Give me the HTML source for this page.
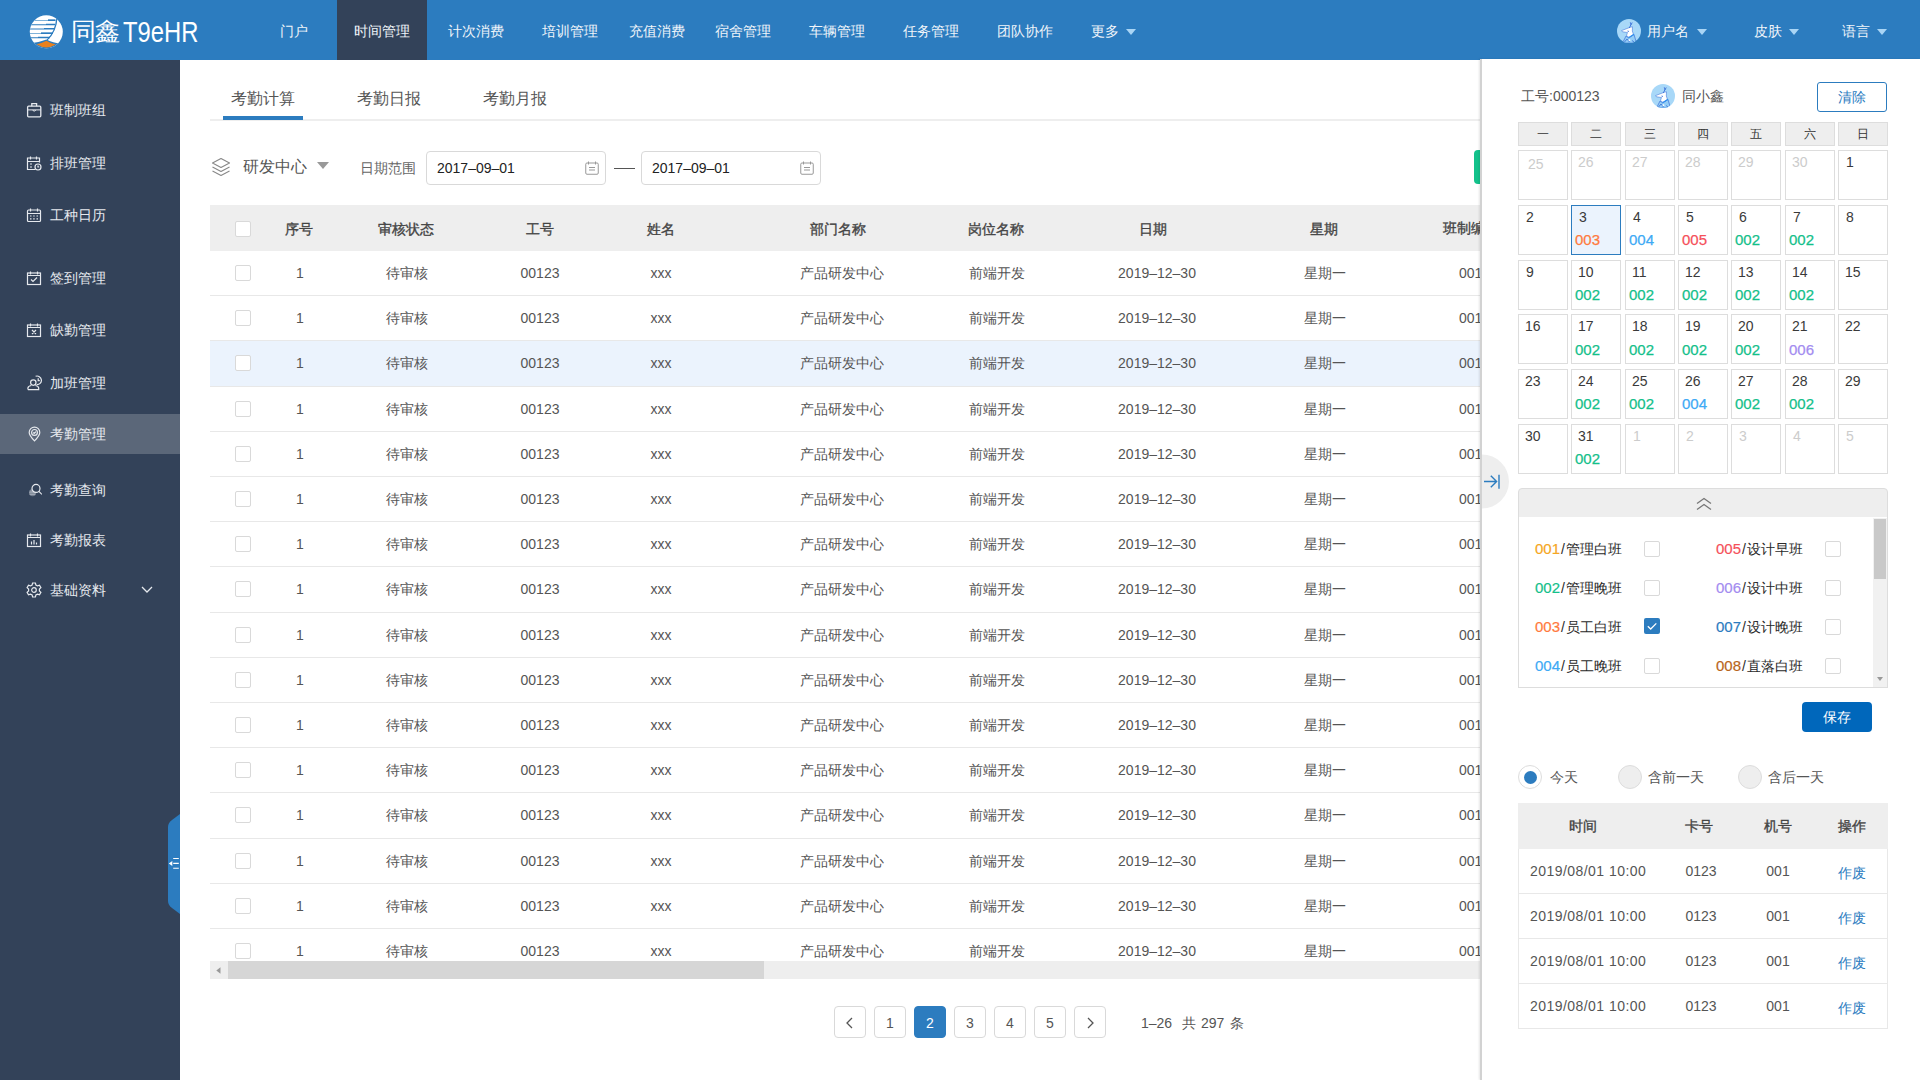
<!DOCTYPE html><html><head><meta charset="utf-8"><style>
*{box-sizing:border-box;margin:0;padding:0}
html,body{width:1920px;height:1080px;overflow:hidden;background:#fff;font-family:"Liberation Sans",sans-serif;font-size:14px;color:#555}
.abs{position:absolute}
.hdr{position:absolute;left:0;top:0;width:1920px;height:60px;background:#2c7cbf}
.nav{position:absolute;top:0.8px;height:60px;line-height:60px;color:#f0f5fa;font-size:14px;white-space:nowrap}
.side{position:absolute;left:0;top:60px;width:180px;height:1020px;background:#334259}
.si{position:absolute;left:0;width:180px;height:40px;line-height:40px;color:#e6e9ee;font-size:14px}
.si .t{position:absolute;left:50px;top:0}
.si svg{position:absolute;left:26px;top:12px}
.tc{position:absolute;text-align:center;white-space:nowrap}
.cb{position:absolute;width:16px;height:16px;border:1px solid #d9d9d9;border-radius:2px;background:#fff}
</style></head><body>

<div class="hdr"></div>
<svg class="abs" style="left:26px;top:12px" width="42" height="40" viewBox="0 0 42 40">
<defs><clipPath id="lc"><circle cx="20.3" cy="19.8" r="16.5"/></clipPath></defs>
<g clip-path="url(#lc)">
<rect x="0" y="0" width="42" height="40" fill="#fff"/>
<g fill="#2c7cbf">
<path d="M0 8h22v-0.6h7v1.5H0z" fill="#7fb2d9"/><path d="M22 7.4h7.5v1.5H22z"/>
<path d="M0 12.3h20v-0.6h9v1.5H0z"/>
<path d="M0 16.5h18v-0.6h10v1.5H0z"/>
<path d="M0 21h15v-0.6h12v1.5H0z" fill="#7fb2d9"/><path d="M15 20.4h12v1.5H15z"/>
<path d="M0 25.3h12v-0.6h12v1.5H0z"/>
<path d="M30.2 5.5 Q29.5 19 20.8 27.5 L21.6 28.3 Q30.8 19.5 31.6 5.5Z"/>
<path d="M0 31.5 Q12 31 20.5 27.6 Q27 31.5 42 32.5 V40 H0Z"/>
</g>
<path d="M10.5 32.3 Q16 31 20.5 28.7 Q25 31.5 29.8 32.6 Q20 38.5 10.5 32.3Z" fill="#e8811f"/>
</g></svg>
<div class="abs" style="left:71px;top:14px;height:34px;line-height:34px;color:#fff;font-size:25px;white-space:nowrap;letter-spacing:-1px">同鑫</div>
<div class="abs" style="left:123px;top:12px;height:40px;line-height:40px;color:#fff;font-size:29px;white-space:nowrap;transform:scaleX(0.82);transform-origin:0 50%">T9eHR</div>
<div class="abs" style="left:337px;top:0;width:90px;height:60px;background:#334259"></div>
<div class="nav" style="left:234px;width:120px;text-align:center">门户</div>
<div class="nav" style="left:322px;width:120px;text-align:center">时间管理</div>
<div class="nav" style="left:416px;width:120px;text-align:center">计次消费</div>
<div class="nav" style="left:510px;width:120px;text-align:center">培训管理</div>
<div class="nav" style="left:597px;width:120px;text-align:center">充值消费</div>
<div class="nav" style="left:683px;width:120px;text-align:center">宿舍管理</div>
<div class="nav" style="left:777px;width:120px;text-align:center">车辆管理</div>
<div class="nav" style="left:871px;width:120px;text-align:center">任务管理</div>
<div class="nav" style="left:965px;width:120px;text-align:center">团队协作</div>
<div class="nav" style="left:1045px;width:120px;text-align:center">更多</div>
<svg class="abs" style="left:1126px;top:29px" width="10" height="6" viewBox="0 0 10 6"><path d="M0 0H10L5.0 6Z" fill="#a9d5f5"/></svg>
<svg class="abs" style="left:1617px;top:19px" width="24" height="24" viewBox="0 0 24 24">
<defs><clipPath id="avc"><circle cx="12" cy="12" r="12"/></clipPath></defs>
<circle cx="12" cy="12" r="12" fill="#a8d8f8"/>
<g clip-path="url(#avc)">
<path d="M5.5 24 L9 17 L11.8 19 L17 15.5 L19.5 24 Z" fill="#93cdf6" stroke="#2d5fd0" stroke-width="0.6"/>
<path d="M4.6 11.6 L10 9.5 L13.5 8.2 L15.5 7.8 L15.3 12 L16.5 15.5 L12 18.5 L9.5 16.5 L10.5 13.5 L5.5 12.8 Z" fill="#fff" stroke="#3a6fd8" stroke-width="0.55"/>
<path d="M12.3 9 L14 5.5 M14 5.8 L13.3 3.3 M14 5.8 L15.2 3.5 M10.5 12 L12 12.5" stroke="#3a6fd8" stroke-width="0.9" fill="none"/>
<path d="M11.5 18.6 L17 15.2" stroke="#2b8ff0" stroke-width="1.1"/>
<path d="M7.5 23 L10 20 L12.5 23 M15 21.5 L17 23" stroke="#2d5fd0" stroke-width="0.7" fill="none"/>
<circle cx="12.5" cy="21.2" r="0.9" fill="#fff"/>
</g>
</svg>
<div class="nav" style="left:1647px">用户名</div>
<svg class="abs" style="left:1697px;top:29px" width="10" height="6" viewBox="0 0 10 6"><path d="M0 0H10L5.0 6Z" fill="#a9d5f5"/></svg>
<div class="nav" style="left:1754px">皮肤</div>
<svg class="abs" style="left:1789px;top:29px" width="10" height="6" viewBox="0 0 10 6"><path d="M0 0H10L5.0 6Z" fill="#a9d5f5"/></svg>
<div class="nav" style="left:1842px">语言</div>
<svg class="abs" style="left:1877px;top:29px" width="10" height="6" viewBox="0 0 10 6"><path d="M0 0H10L5.0 6Z" fill="#a9d5f5"/></svg>
<div class="side"></div>
<div class="si" style="top:90px;"><svg width="16" height="16" viewBox="0 0 16 16"><rect x="1.6" y="4.2" width="13.2" height="10.6" rx="1" stroke="#e6e9ee" stroke-width="1.3" fill="none"/><path d="M5.8 4.2V1.6h4.8v2.6" stroke="#e6e9ee" stroke-width="1.3" fill="none"/><path d="M1.6 7.9h13.2" stroke="#e6e9ee" stroke-width="1" fill="none"/><path d="M6.6 8.3q1.6 1.6 3.2 0" stroke="#e6e9ee" stroke-width="1" fill="none"/></svg><span class="t">班制班组</span></div>
<div class="si" style="top:143px;"><svg width="16" height="16" viewBox="0 0 16 16"><path d="M9 14.5H1.5V3h12v4.5M4.5 1.5v3M10.5 1.5v3M1.5 6.5h12M4 9h2M4 12h2" stroke="#e6e9ee" stroke-width="1.2" fill="none"/><circle cx="12" cy="12" r="3" stroke="#e6e9ee" stroke-width="1.2" fill="none"/><path d="M12 10.5V12h1.2" stroke="#e6e9ee" stroke-width="1.2" fill="none"/></svg><span class="t">排班管理</span></div>
<div class="si" style="top:195px;"><svg width="16" height="16" viewBox="0 0 16 16"><rect x="1.5" y="3" width="13" height="11.5" rx="1" stroke="#e6e9ee" stroke-width="1.2" fill="none"/><path d="M4.5 1.5v3M11.5 1.5v3M1.5 6.5h13M4 9h1.5M7.2 9h1.5M10.5 9H12M4 11.8h1.5M7.2 11.8h1.5M10.5 11.8H12" stroke="#e6e9ee" stroke-width="1.2" fill="none"/></svg><span class="t">工种日历</span></div>
<div class="si" style="top:258px;"><svg width="16" height="16" viewBox="0 0 16 16"><rect x="1.5" y="3" width="13" height="11.5" stroke="#e6e9ee" stroke-width="1.2" fill="none"/><path d="M4.5 1.5v3M11.5 1.5v3M1.5 5.5h13M5 9.5l2 2 4-4" stroke="#e6e9ee" stroke-width="1.2" fill="none"/></svg><span class="t">签到管理</span></div>
<div class="si" style="top:310px;"><svg width="16" height="16" viewBox="0 0 16 16"><rect x="1.5" y="3" width="13" height="11.5" stroke="#e6e9ee" stroke-width="1.2" fill="none"/><path d="M4.5 1.5v3M11.5 1.5v3M1.5 5.5h13M6 8l4 4M10 8l-4 4" stroke="#e6e9ee" stroke-width="1.2" fill="none"/></svg><span class="t">缺勤管理</span></div>
<div class="si" style="top:363px;"><svg width="16" height="16" viewBox="0 0 16 16"><path d="M9.6 1.3A4.3 4.3 0 1 1 10.6 9.6" stroke="#e6e9ee" stroke-width="1.2" fill="none"/><path d="M12.2 3.3v2.3h1.6" stroke="#e6e9ee" stroke-width="1.2" fill="none"/><circle cx="7.3" cy="7.6" r="2.7" stroke="#e6e9ee" stroke-width="1.2" fill="none"/><path d="M1.9 14.6V13.2Q1.9 11.1 5.2 10.5M9.4 10.5Q12.7 11.1 12.7 13.2V14.6H1.9" stroke="#e6e9ee" stroke-width="1.2" fill="none"/></svg><span class="t">加班管理</span></div>
<div class="si" style="top:414px;background:#5b6779;"><svg width="16" height="16" viewBox="0 0 16 16"><path d="M8.5 14.8C5 11.2 3.2 8.7 3.2 6.4a5.3 5.3 0 0 1 10.6 0c0 2.3-1.8 4.8-5.3 8.4z" stroke="#e6e9ee" stroke-width="1.2" fill="none"/><circle cx="8.5" cy="6.4" r="2.9" stroke="#e6e9ee" stroke-width="1.2" fill="none"/><path d="M7.2 6.5l1 1 1.8-1.9" stroke="#e6e9ee" stroke-width="1.2" fill="none"/></svg><span class="t">考勤管理</span></div>
<div class="si" style="top:470px;"><svg width="16" height="16" viewBox="0 0 16 16"><circle cx="6.6" cy="10.6" r="3.6" fill="rgba(230,233,238,0.35)"/><path d="M3.6 9.2h5.5M3.2 10.8h6.4M3.5 12.4h5.8" stroke="rgba(230,233,238,0.55)" stroke-width="0.8"/><circle cx="10" cy="6.4" r="4" fill="#334259" stroke="#e6e9ee" stroke-width="1.2"/><path d="M12.9 9.4l3 3" stroke="#e6e9ee" stroke-width="1.2" fill="none"/></svg><span class="t">考勤查询</span></div>
<div class="si" style="top:520px;"><svg width="16" height="16" viewBox="0 0 16 16"><rect x="1.5" y="3" width="13" height="11.5" stroke="#e6e9ee" stroke-width="1.2" fill="none"/><path d="M4.5 1.5v3M11.5 1.5v3M1.5 5.5h13M5.5 12.5V9.5M8 12.5V8M10.5 12.5v-2" stroke="#e6e9ee" stroke-width="1.2" fill="none"/></svg><span class="t">考勤报表</span></div>
<div class="si" style="top:570px;"><svg width="16" height="16" viewBox="0 0 16 16"><path d="M6.6 1h2.8l.5 2 1.6.9 2-.6 1.4 2.4-1.5 1.4v1.8l1.5 1.4-1.4 2.4-2-.6-1.6.9-.5 2H6.6l-.5-2-1.6-.9-2 .6L1.1 10.3l1.5-1.4V7.1L1.1 5.7l1.4-2.4 2 .6 1.6-.9z" stroke="#e6e9ee" stroke-width="1.2" fill="none"/><circle cx="8" cy="8" r="2.3" stroke="#e6e9ee" stroke-width="1.2" fill="none"/></svg><span class="t">基础资料</span></div>
<svg class="abs" style="left:141px;top:586px" width="12" height="8" viewBox="0 0 12 8"><path d="M1 1l5 5 5-5" stroke="#e6e9ee" stroke-width="1.3" fill="none"/></svg>
<svg class="abs" style="left:168px;top:814px" width="12" height="100" viewBox="0 0 12 100"><path d="M12 0 L4 6 Q0 9 0 13 V87 Q0 91 4 94 L12 100 Z" fill="#2c7cbf"/>
<path d="M0.8 49.4L4.3 46.9V51.9Z" fill="#fff"/><path d="M5.2 44.5h5.6M5.2 49.4h5.6M5.2 54.3h5.6" stroke="#fff" stroke-width="1.1" fill="none"/></svg>
<div class="abs" style="left:231px;top:86.7px;height:24px;line-height:24px;font-size:16px;color:#555;white-space:nowrap">考勤计算</div>
<div class="abs" style="left:357px;top:86.7px;height:24px;line-height:24px;font-size:16px;color:#555;white-space:nowrap">考勤日报</div>
<div class="abs" style="left:483px;top:86.7px;height:24px;line-height:24px;font-size:16px;color:#555;white-space:nowrap">考勤月报</div>
<div class="abs" style="left:210px;top:119px;width:1270px;height:2px;background:#eeeeee"></div>
<div class="abs" style="left:223px;top:116px;width:80px;height:4px;background:#2c7cbf"></div>
<svg class="abs" style="left:211px;top:157px" width="20" height="20" viewBox="0 0 20 20"><path d="M10 1.5L18.5 6 10 10.5 1.5 6z" stroke="#888" stroke-width="1.1" fill="none" stroke-linejoin="round"/><path d="M1.5 10L10 14.5 18.5 10M1.5 14L10 18.5 18.5 14" stroke="#888" stroke-width="1.1" fill="none" stroke-linejoin="round"/></svg>
<div class="abs" style="left:243px;top:155px;height:24px;line-height:24px;font-size:16px;color:#555;white-space:nowrap">研发中心</div>
<svg class="abs" style="left:317px;top:162px" width="12" height="7" viewBox="0 0 12 7"><path d="M0 0H12L6.0 7Z" fill="#999"/></svg>
<div class="abs" style="left:360px;top:158px;height:20px;line-height:20px;font-size:14px;color:#666;white-space:nowrap">日期范围</div>
<div class="abs" style="left:426px;top:151px;width:180px;height:34px;border:1px solid #d9d9d9;border-radius:4px;background:#fff"></div>
<div class="abs" style="left:437px;top:158px;height:20px;line-height:20px;font-size:14px;color:#222;white-space:nowrap">2017–09–01</div>
<svg class="abs" style="left:585px;top:161px" width="14" height="14" viewBox="0 0 14 14"><rect x="0.75" y="2" width="12.5" height="11.25" rx="1.2" stroke="#999" stroke-width="1" fill="none"/><path d="M3.5 0.5v3M10.5 0.5v3M4 6.5h6M4 9h6" stroke="#999" stroke-width="1" fill="none"/></svg>
<div class="abs" style="left:641px;top:151px;width:180px;height:34px;border:1px solid #d9d9d9;border-radius:4px;background:#fff"></div>
<div class="abs" style="left:652px;top:158px;height:20px;line-height:20px;font-size:14px;color:#222;white-space:nowrap">2017–09–01</div>
<svg class="abs" style="left:800px;top:161px" width="14" height="14" viewBox="0 0 14 14"><rect x="0.75" y="2" width="12.5" height="11.25" rx="1.2" stroke="#999" stroke-width="1" fill="none"/><path d="M3.5 0.5v3M10.5 0.5v3M4 6.5h6M4 9h6" stroke="#999" stroke-width="1" fill="none"/></svg>
<div class="abs" style="left:614px;top:168px;width:21px;height:1px;background:#555"></div>
<div class="abs" style="left:1474px;top:150px;width:20px;height:34px;border-radius:4px;background:#13c28b"></div>
<div class="abs" style="left:210px;top:205px;width:1270px;height:46px;background:#eeeeee"></div>
<div class="cb" style="left:235px;top:221px"></div>
<div class="tc" style="left:219px;top:218.7px;width:160px;height:20px;line-height:20px;color:#444;-webkit-text-stroke:0.35px #444">序号</div>
<div class="tc" style="left:326px;top:218.7px;width:160px;height:20px;line-height:20px;color:#444;-webkit-text-stroke:0.35px #444">审核状态</div>
<div class="tc" style="left:460px;top:218.7px;width:160px;height:20px;line-height:20px;color:#444;-webkit-text-stroke:0.35px #444">工号</div>
<div class="tc" style="left:581px;top:218.7px;width:160px;height:20px;line-height:20px;color:#444;-webkit-text-stroke:0.35px #444">姓名</div>
<div class="tc" style="left:758px;top:218.7px;width:160px;height:20px;line-height:20px;color:#444;-webkit-text-stroke:0.35px #444">部门名称</div>
<div class="tc" style="left:916px;top:218.7px;width:160px;height:20px;line-height:20px;color:#444;-webkit-text-stroke:0.35px #444">岗位名称</div>
<div class="tc" style="left:1073px;top:218.7px;width:160px;height:20px;line-height:20px;color:#444;-webkit-text-stroke:0.35px #444">日期</div>
<div class="tc" style="left:1244px;top:218.7px;width:160px;height:20px;line-height:20px;color:#444;-webkit-text-stroke:0.35px #444">星期</div>
<div class="abs" style="left:210px;top:251.0px;width:1270px;height:45.2px;background:#fff;border-bottom:1px solid #e8e8e8"></div>
<div class="cb" style="left:235px;top:265.0px"></div>
<div class="tc" style="left:220px;top:263.0px;width:160px;height:20px;line-height:20px;color:#555">1</div>
<div class="tc" style="left:327px;top:263.0px;width:160px;height:20px;line-height:20px;color:#555">待审核</div>
<div class="tc" style="left:460px;top:263.0px;width:160px;height:20px;line-height:20px;color:#555">00123</div>
<div class="tc" style="left:581px;top:263.0px;width:160px;height:20px;line-height:20px;color:#555">xxx</div>
<div class="tc" style="left:762px;top:263.0px;width:160px;height:20px;line-height:20px;color:#555">产品研发中心</div>
<div class="tc" style="left:917px;top:263.0px;width:160px;height:20px;line-height:20px;color:#555">前端开发</div>
<div class="tc" style="left:1077px;top:263.0px;width:160px;height:20px;line-height:20px;color:#555">2019–12–30</div>
<div class="tc" style="left:1245px;top:263.0px;width:160px;height:20px;line-height:20px;color:#555">星期一</div>
<div class="abs" style="left:210px;top:296.2px;width:1270px;height:45.2px;background:#fff;border-bottom:1px solid #e8e8e8"></div>
<div class="cb" style="left:235px;top:310.2px"></div>
<div class="tc" style="left:220px;top:308.2px;width:160px;height:20px;line-height:20px;color:#555">1</div>
<div class="tc" style="left:327px;top:308.2px;width:160px;height:20px;line-height:20px;color:#555">待审核</div>
<div class="tc" style="left:460px;top:308.2px;width:160px;height:20px;line-height:20px;color:#555">00123</div>
<div class="tc" style="left:581px;top:308.2px;width:160px;height:20px;line-height:20px;color:#555">xxx</div>
<div class="tc" style="left:762px;top:308.2px;width:160px;height:20px;line-height:20px;color:#555">产品研发中心</div>
<div class="tc" style="left:917px;top:308.2px;width:160px;height:20px;line-height:20px;color:#555">前端开发</div>
<div class="tc" style="left:1077px;top:308.2px;width:160px;height:20px;line-height:20px;color:#555">2019–12–30</div>
<div class="tc" style="left:1245px;top:308.2px;width:160px;height:20px;line-height:20px;color:#555">星期一</div>
<div class="abs" style="left:210px;top:341.4px;width:1270px;height:45.2px;background:#ebf3fd;border-bottom:1px solid #e8e8e8"></div>
<div class="cb" style="left:235px;top:355.4px"></div>
<div class="tc" style="left:220px;top:353.4px;width:160px;height:20px;line-height:20px;color:#555">1</div>
<div class="tc" style="left:327px;top:353.4px;width:160px;height:20px;line-height:20px;color:#555">待审核</div>
<div class="tc" style="left:460px;top:353.4px;width:160px;height:20px;line-height:20px;color:#555">00123</div>
<div class="tc" style="left:581px;top:353.4px;width:160px;height:20px;line-height:20px;color:#555">xxx</div>
<div class="tc" style="left:762px;top:353.4px;width:160px;height:20px;line-height:20px;color:#555">产品研发中心</div>
<div class="tc" style="left:917px;top:353.4px;width:160px;height:20px;line-height:20px;color:#555">前端开发</div>
<div class="tc" style="left:1077px;top:353.4px;width:160px;height:20px;line-height:20px;color:#555">2019–12–30</div>
<div class="tc" style="left:1245px;top:353.4px;width:160px;height:20px;line-height:20px;color:#555">星期一</div>
<div class="abs" style="left:210px;top:386.6px;width:1270px;height:45.2px;background:#fff;border-bottom:1px solid #e8e8e8"></div>
<div class="cb" style="left:235px;top:400.6px"></div>
<div class="tc" style="left:220px;top:398.6px;width:160px;height:20px;line-height:20px;color:#555">1</div>
<div class="tc" style="left:327px;top:398.6px;width:160px;height:20px;line-height:20px;color:#555">待审核</div>
<div class="tc" style="left:460px;top:398.6px;width:160px;height:20px;line-height:20px;color:#555">00123</div>
<div class="tc" style="left:581px;top:398.6px;width:160px;height:20px;line-height:20px;color:#555">xxx</div>
<div class="tc" style="left:762px;top:398.6px;width:160px;height:20px;line-height:20px;color:#555">产品研发中心</div>
<div class="tc" style="left:917px;top:398.6px;width:160px;height:20px;line-height:20px;color:#555">前端开发</div>
<div class="tc" style="left:1077px;top:398.6px;width:160px;height:20px;line-height:20px;color:#555">2019–12–30</div>
<div class="tc" style="left:1245px;top:398.6px;width:160px;height:20px;line-height:20px;color:#555">星期一</div>
<div class="abs" style="left:210px;top:431.8px;width:1270px;height:45.2px;background:#fff;border-bottom:1px solid #e8e8e8"></div>
<div class="cb" style="left:235px;top:445.8px"></div>
<div class="tc" style="left:220px;top:443.8px;width:160px;height:20px;line-height:20px;color:#555">1</div>
<div class="tc" style="left:327px;top:443.8px;width:160px;height:20px;line-height:20px;color:#555">待审核</div>
<div class="tc" style="left:460px;top:443.8px;width:160px;height:20px;line-height:20px;color:#555">00123</div>
<div class="tc" style="left:581px;top:443.8px;width:160px;height:20px;line-height:20px;color:#555">xxx</div>
<div class="tc" style="left:762px;top:443.8px;width:160px;height:20px;line-height:20px;color:#555">产品研发中心</div>
<div class="tc" style="left:917px;top:443.8px;width:160px;height:20px;line-height:20px;color:#555">前端开发</div>
<div class="tc" style="left:1077px;top:443.8px;width:160px;height:20px;line-height:20px;color:#555">2019–12–30</div>
<div class="tc" style="left:1245px;top:443.8px;width:160px;height:20px;line-height:20px;color:#555">星期一</div>
<div class="abs" style="left:210px;top:477.0px;width:1270px;height:45.2px;background:#fff;border-bottom:1px solid #e8e8e8"></div>
<div class="cb" style="left:235px;top:491.0px"></div>
<div class="tc" style="left:220px;top:489.0px;width:160px;height:20px;line-height:20px;color:#555">1</div>
<div class="tc" style="left:327px;top:489.0px;width:160px;height:20px;line-height:20px;color:#555">待审核</div>
<div class="tc" style="left:460px;top:489.0px;width:160px;height:20px;line-height:20px;color:#555">00123</div>
<div class="tc" style="left:581px;top:489.0px;width:160px;height:20px;line-height:20px;color:#555">xxx</div>
<div class="tc" style="left:762px;top:489.0px;width:160px;height:20px;line-height:20px;color:#555">产品研发中心</div>
<div class="tc" style="left:917px;top:489.0px;width:160px;height:20px;line-height:20px;color:#555">前端开发</div>
<div class="tc" style="left:1077px;top:489.0px;width:160px;height:20px;line-height:20px;color:#555">2019–12–30</div>
<div class="tc" style="left:1245px;top:489.0px;width:160px;height:20px;line-height:20px;color:#555">星期一</div>
<div class="abs" style="left:210px;top:522.2px;width:1270px;height:45.2px;background:#fff;border-bottom:1px solid #e8e8e8"></div>
<div class="cb" style="left:235px;top:536.2px"></div>
<div class="tc" style="left:220px;top:534.2px;width:160px;height:20px;line-height:20px;color:#555">1</div>
<div class="tc" style="left:327px;top:534.2px;width:160px;height:20px;line-height:20px;color:#555">待审核</div>
<div class="tc" style="left:460px;top:534.2px;width:160px;height:20px;line-height:20px;color:#555">00123</div>
<div class="tc" style="left:581px;top:534.2px;width:160px;height:20px;line-height:20px;color:#555">xxx</div>
<div class="tc" style="left:762px;top:534.2px;width:160px;height:20px;line-height:20px;color:#555">产品研发中心</div>
<div class="tc" style="left:917px;top:534.2px;width:160px;height:20px;line-height:20px;color:#555">前端开发</div>
<div class="tc" style="left:1077px;top:534.2px;width:160px;height:20px;line-height:20px;color:#555">2019–12–30</div>
<div class="tc" style="left:1245px;top:534.2px;width:160px;height:20px;line-height:20px;color:#555">星期一</div>
<div class="abs" style="left:210px;top:567.4px;width:1270px;height:45.2px;background:#fff;border-bottom:1px solid #e8e8e8"></div>
<div class="cb" style="left:235px;top:581.4px"></div>
<div class="tc" style="left:220px;top:579.4px;width:160px;height:20px;line-height:20px;color:#555">1</div>
<div class="tc" style="left:327px;top:579.4px;width:160px;height:20px;line-height:20px;color:#555">待审核</div>
<div class="tc" style="left:460px;top:579.4px;width:160px;height:20px;line-height:20px;color:#555">00123</div>
<div class="tc" style="left:581px;top:579.4px;width:160px;height:20px;line-height:20px;color:#555">xxx</div>
<div class="tc" style="left:762px;top:579.4px;width:160px;height:20px;line-height:20px;color:#555">产品研发中心</div>
<div class="tc" style="left:917px;top:579.4px;width:160px;height:20px;line-height:20px;color:#555">前端开发</div>
<div class="tc" style="left:1077px;top:579.4px;width:160px;height:20px;line-height:20px;color:#555">2019–12–30</div>
<div class="tc" style="left:1245px;top:579.4px;width:160px;height:20px;line-height:20px;color:#555">星期一</div>
<div class="abs" style="left:210px;top:612.6px;width:1270px;height:45.2px;background:#fff;border-bottom:1px solid #e8e8e8"></div>
<div class="cb" style="left:235px;top:626.6px"></div>
<div class="tc" style="left:220px;top:624.6px;width:160px;height:20px;line-height:20px;color:#555">1</div>
<div class="tc" style="left:327px;top:624.6px;width:160px;height:20px;line-height:20px;color:#555">待审核</div>
<div class="tc" style="left:460px;top:624.6px;width:160px;height:20px;line-height:20px;color:#555">00123</div>
<div class="tc" style="left:581px;top:624.6px;width:160px;height:20px;line-height:20px;color:#555">xxx</div>
<div class="tc" style="left:762px;top:624.6px;width:160px;height:20px;line-height:20px;color:#555">产品研发中心</div>
<div class="tc" style="left:917px;top:624.6px;width:160px;height:20px;line-height:20px;color:#555">前端开发</div>
<div class="tc" style="left:1077px;top:624.6px;width:160px;height:20px;line-height:20px;color:#555">2019–12–30</div>
<div class="tc" style="left:1245px;top:624.6px;width:160px;height:20px;line-height:20px;color:#555">星期一</div>
<div class="abs" style="left:210px;top:657.8px;width:1270px;height:45.2px;background:#fff;border-bottom:1px solid #e8e8e8"></div>
<div class="cb" style="left:235px;top:671.8px"></div>
<div class="tc" style="left:220px;top:669.8px;width:160px;height:20px;line-height:20px;color:#555">1</div>
<div class="tc" style="left:327px;top:669.8px;width:160px;height:20px;line-height:20px;color:#555">待审核</div>
<div class="tc" style="left:460px;top:669.8px;width:160px;height:20px;line-height:20px;color:#555">00123</div>
<div class="tc" style="left:581px;top:669.8px;width:160px;height:20px;line-height:20px;color:#555">xxx</div>
<div class="tc" style="left:762px;top:669.8px;width:160px;height:20px;line-height:20px;color:#555">产品研发中心</div>
<div class="tc" style="left:917px;top:669.8px;width:160px;height:20px;line-height:20px;color:#555">前端开发</div>
<div class="tc" style="left:1077px;top:669.8px;width:160px;height:20px;line-height:20px;color:#555">2019–12–30</div>
<div class="tc" style="left:1245px;top:669.8px;width:160px;height:20px;line-height:20px;color:#555">星期一</div>
<div class="abs" style="left:210px;top:703.0px;width:1270px;height:45.2px;background:#fff;border-bottom:1px solid #e8e8e8"></div>
<div class="cb" style="left:235px;top:717.0px"></div>
<div class="tc" style="left:220px;top:715.0px;width:160px;height:20px;line-height:20px;color:#555">1</div>
<div class="tc" style="left:327px;top:715.0px;width:160px;height:20px;line-height:20px;color:#555">待审核</div>
<div class="tc" style="left:460px;top:715.0px;width:160px;height:20px;line-height:20px;color:#555">00123</div>
<div class="tc" style="left:581px;top:715.0px;width:160px;height:20px;line-height:20px;color:#555">xxx</div>
<div class="tc" style="left:762px;top:715.0px;width:160px;height:20px;line-height:20px;color:#555">产品研发中心</div>
<div class="tc" style="left:917px;top:715.0px;width:160px;height:20px;line-height:20px;color:#555">前端开发</div>
<div class="tc" style="left:1077px;top:715.0px;width:160px;height:20px;line-height:20px;color:#555">2019–12–30</div>
<div class="tc" style="left:1245px;top:715.0px;width:160px;height:20px;line-height:20px;color:#555">星期一</div>
<div class="abs" style="left:210px;top:748.2px;width:1270px;height:45.2px;background:#fff;border-bottom:1px solid #e8e8e8"></div>
<div class="cb" style="left:235px;top:762.2px"></div>
<div class="tc" style="left:220px;top:760.2px;width:160px;height:20px;line-height:20px;color:#555">1</div>
<div class="tc" style="left:327px;top:760.2px;width:160px;height:20px;line-height:20px;color:#555">待审核</div>
<div class="tc" style="left:460px;top:760.2px;width:160px;height:20px;line-height:20px;color:#555">00123</div>
<div class="tc" style="left:581px;top:760.2px;width:160px;height:20px;line-height:20px;color:#555">xxx</div>
<div class="tc" style="left:762px;top:760.2px;width:160px;height:20px;line-height:20px;color:#555">产品研发中心</div>
<div class="tc" style="left:917px;top:760.2px;width:160px;height:20px;line-height:20px;color:#555">前端开发</div>
<div class="tc" style="left:1077px;top:760.2px;width:160px;height:20px;line-height:20px;color:#555">2019–12–30</div>
<div class="tc" style="left:1245px;top:760.2px;width:160px;height:20px;line-height:20px;color:#555">星期一</div>
<div class="abs" style="left:210px;top:793.4px;width:1270px;height:45.2px;background:#fff;border-bottom:1px solid #e8e8e8"></div>
<div class="cb" style="left:235px;top:807.4px"></div>
<div class="tc" style="left:220px;top:805.4px;width:160px;height:20px;line-height:20px;color:#555">1</div>
<div class="tc" style="left:327px;top:805.4px;width:160px;height:20px;line-height:20px;color:#555">待审核</div>
<div class="tc" style="left:460px;top:805.4px;width:160px;height:20px;line-height:20px;color:#555">00123</div>
<div class="tc" style="left:581px;top:805.4px;width:160px;height:20px;line-height:20px;color:#555">xxx</div>
<div class="tc" style="left:762px;top:805.4px;width:160px;height:20px;line-height:20px;color:#555">产品研发中心</div>
<div class="tc" style="left:917px;top:805.4px;width:160px;height:20px;line-height:20px;color:#555">前端开发</div>
<div class="tc" style="left:1077px;top:805.4px;width:160px;height:20px;line-height:20px;color:#555">2019–12–30</div>
<div class="tc" style="left:1245px;top:805.4px;width:160px;height:20px;line-height:20px;color:#555">星期一</div>
<div class="abs" style="left:210px;top:838.6px;width:1270px;height:45.2px;background:#fff;border-bottom:1px solid #e8e8e8"></div>
<div class="cb" style="left:235px;top:852.6px"></div>
<div class="tc" style="left:220px;top:850.6px;width:160px;height:20px;line-height:20px;color:#555">1</div>
<div class="tc" style="left:327px;top:850.6px;width:160px;height:20px;line-height:20px;color:#555">待审核</div>
<div class="tc" style="left:460px;top:850.6px;width:160px;height:20px;line-height:20px;color:#555">00123</div>
<div class="tc" style="left:581px;top:850.6px;width:160px;height:20px;line-height:20px;color:#555">xxx</div>
<div class="tc" style="left:762px;top:850.6px;width:160px;height:20px;line-height:20px;color:#555">产品研发中心</div>
<div class="tc" style="left:917px;top:850.6px;width:160px;height:20px;line-height:20px;color:#555">前端开发</div>
<div class="tc" style="left:1077px;top:850.6px;width:160px;height:20px;line-height:20px;color:#555">2019–12–30</div>
<div class="tc" style="left:1245px;top:850.6px;width:160px;height:20px;line-height:20px;color:#555">星期一</div>
<div class="abs" style="left:210px;top:883.8px;width:1270px;height:45.2px;background:#fff;border-bottom:1px solid #e8e8e8"></div>
<div class="cb" style="left:235px;top:897.8px"></div>
<div class="tc" style="left:220px;top:895.8px;width:160px;height:20px;line-height:20px;color:#555">1</div>
<div class="tc" style="left:327px;top:895.8px;width:160px;height:20px;line-height:20px;color:#555">待审核</div>
<div class="tc" style="left:460px;top:895.8px;width:160px;height:20px;line-height:20px;color:#555">00123</div>
<div class="tc" style="left:581px;top:895.8px;width:160px;height:20px;line-height:20px;color:#555">xxx</div>
<div class="tc" style="left:762px;top:895.8px;width:160px;height:20px;line-height:20px;color:#555">产品研发中心</div>
<div class="tc" style="left:917px;top:895.8px;width:160px;height:20px;line-height:20px;color:#555">前端开发</div>
<div class="tc" style="left:1077px;top:895.8px;width:160px;height:20px;line-height:20px;color:#555">2019–12–30</div>
<div class="tc" style="left:1245px;top:895.8px;width:160px;height:20px;line-height:20px;color:#555">星期一</div>
<div class="abs" style="left:210px;top:929.0px;width:1270px;height:45.2px;background:#fff;border-bottom:1px solid #e8e8e8"></div>
<div class="cb" style="left:235px;top:943.0px"></div>
<div class="tc" style="left:220px;top:941.0px;width:160px;height:20px;line-height:20px;color:#555">1</div>
<div class="tc" style="left:327px;top:941.0px;width:160px;height:20px;line-height:20px;color:#555">待审核</div>
<div class="tc" style="left:460px;top:941.0px;width:160px;height:20px;line-height:20px;color:#555">00123</div>
<div class="tc" style="left:581px;top:941.0px;width:160px;height:20px;line-height:20px;color:#555">xxx</div>
<div class="tc" style="left:762px;top:941.0px;width:160px;height:20px;line-height:20px;color:#555">产品研发中心</div>
<div class="tc" style="left:917px;top:941.0px;width:160px;height:20px;line-height:20px;color:#555">前端开发</div>
<div class="tc" style="left:1077px;top:941.0px;width:160px;height:20px;line-height:20px;color:#555">2019–12–30</div>
<div class="tc" style="left:1245px;top:941.0px;width:160px;height:20px;line-height:20px;color:#555">星期一</div>
<div class="abs" style="left:210px;top:961px;width:1270px;height:18px;background:#eeeeee"></div>
<div class="abs" style="left:228px;top:961px;width:536px;height:18px;background:#d6d6d6"></div>
<svg class="abs" style="left:216px;top:967px" width="5" height="7" viewBox="0 0 5 7"><path d="M4.5 0.3V6.7L0.3 3.5Z" fill="#999"/></svg>
<div class="abs" style="left:180px;top:979px;width:1300px;height:101px;background:#fff"></div>
<div class="abs" style="left:834px;top:1006px;width:32px;height:32px;border:1px solid #d9d9d9;border-radius:4px;line-height:30px;padding-top:1px;text-align:center;font-size:14px;color:#555;"><svg width="10" height="12" viewBox="0 0 10 12" style="vertical-align:-1px"><path d="M7 1L2 6l5 5" stroke="#555" stroke-width="1.3" fill="none"/></svg></div>
<div class="abs" style="left:874px;top:1006px;width:32px;height:32px;border:1px solid #d9d9d9;border-radius:4px;line-height:30px;padding-top:1px;text-align:center;font-size:14px;color:#555;">1</div>
<div class="abs" style="left:914px;top:1006px;width:32px;height:32px;border:1px solid #d9d9d9;border-radius:4px;line-height:30px;padding-top:1px;text-align:center;font-size:14px;color:#555;background:#2c7cbf;border-color:#2c7cbf;color:#fff;">2</div>
<div class="abs" style="left:954px;top:1006px;width:32px;height:32px;border:1px solid #d9d9d9;border-radius:4px;line-height:30px;padding-top:1px;text-align:center;font-size:14px;color:#555;">3</div>
<div class="abs" style="left:994px;top:1006px;width:32px;height:32px;border:1px solid #d9d9d9;border-radius:4px;line-height:30px;padding-top:1px;text-align:center;font-size:14px;color:#555;">4</div>
<div class="abs" style="left:1034px;top:1006px;width:32px;height:32px;border:1px solid #d9d9d9;border-radius:4px;line-height:30px;padding-top:1px;text-align:center;font-size:14px;color:#555;">5</div>
<div class="abs" style="left:1074px;top:1006px;width:32px;height:32px;border:1px solid #d9d9d9;border-radius:4px;line-height:30px;padding-top:1px;text-align:center;font-size:14px;color:#555;"><svg width="10" height="12" viewBox="0 0 10 12" style="vertical-align:-1px"><path d="M3 1l5 5-5 5" stroke="#555" stroke-width="1.3" fill="none"/></svg></div>
<div class="abs" style="left:1141px;top:1013px;height:20px;line-height:20px;color:#555;white-space:nowrap">1–26</div>
<div class="abs" style="left:1182px;top:1013px;height:20px;line-height:20px;color:#555;white-space:nowrap">共</div>
<div class="abs" style="left:1201px;top:1013px;height:20px;line-height:20px;color:#555;white-space:nowrap">297</div>
<div class="abs" style="left:1230px;top:1013px;height:20px;line-height:20px;color:#555;white-space:nowrap">条</div>
<div class="abs" style="left:1443px;top:218px;height:20px;line-height:20px;color:#444;-webkit-text-stroke:0.35px #444;white-space:nowrap">班制编号</div>
<div class="abs" style="left:1459px;top:263.0px;height:20px;line-height:20px;color:#555;white-space:nowrap">001</div>
<div class="abs" style="left:1459px;top:308.2px;height:20px;line-height:20px;color:#555;white-space:nowrap">001</div>
<div class="abs" style="left:1459px;top:353.4px;height:20px;line-height:20px;color:#555;white-space:nowrap">001</div>
<div class="abs" style="left:1459px;top:398.6px;height:20px;line-height:20px;color:#555;white-space:nowrap">001</div>
<div class="abs" style="left:1459px;top:443.8px;height:20px;line-height:20px;color:#555;white-space:nowrap">001</div>
<div class="abs" style="left:1459px;top:489.0px;height:20px;line-height:20px;color:#555;white-space:nowrap">001</div>
<div class="abs" style="left:1459px;top:534.2px;height:20px;line-height:20px;color:#555;white-space:nowrap">001</div>
<div class="abs" style="left:1459px;top:579.4px;height:20px;line-height:20px;color:#555;white-space:nowrap">001</div>
<div class="abs" style="left:1459px;top:624.6px;height:20px;line-height:20px;color:#555;white-space:nowrap">001</div>
<div class="abs" style="left:1459px;top:669.8px;height:20px;line-height:20px;color:#555;white-space:nowrap">001</div>
<div class="abs" style="left:1459px;top:715.0px;height:20px;line-height:20px;color:#555;white-space:nowrap">001</div>
<div class="abs" style="left:1459px;top:760.2px;height:20px;line-height:20px;color:#555;white-space:nowrap">001</div>
<div class="abs" style="left:1459px;top:805.4px;height:20px;line-height:20px;color:#555;white-space:nowrap">001</div>
<div class="abs" style="left:1459px;top:850.6px;height:20px;line-height:20px;color:#555;white-space:nowrap">001</div>
<div class="abs" style="left:1459px;top:895.8px;height:20px;line-height:20px;color:#555;white-space:nowrap">001</div>
<div class="abs" style="left:1459px;top:941.0px;height:20px;line-height:20px;color:#555;white-space:nowrap">001</div>
<div class="abs" style="left:1480px;top:59px;width:440px;height:1021px;background:#fff;border-left:2px solid #d2d2d2;box-shadow:-1px 0 2px rgba(0,0,0,0.10)"></div>
<svg class="abs" style="left:1482px;top:454px" width="28" height="56" viewBox="0 0 28 56"><path d="M0 0.5A27 27 0 0 1 0 54.5Z" fill="#eeeeee"/>
<path d="M2 27.5h12.5M8.8 21.8l5.8 5.7-5.8 5.7M17 20.8v14" stroke="#2c7cbf" stroke-width="1.4" fill="none"/></svg>
<div class="abs" style="left:1521px;top:86px;height:20px;line-height:20px;font-size:14px;color:#555;white-space:nowrap;">工号:000123</div>
<svg class="abs" style="left:1651px;top:84px" width="24" height="24" viewBox="0 0 24 24">
<defs><clipPath id="avc"><circle cx="12" cy="12" r="12"/></clipPath></defs>
<circle cx="12" cy="12" r="12" fill="#a8d8f8"/>
<g clip-path="url(#avc)">
<path d="M5.5 24 L9 17 L11.8 19 L17 15.5 L19.5 24 Z" fill="#93cdf6" stroke="#2d5fd0" stroke-width="0.6"/>
<path d="M4.6 11.6 L10 9.5 L13.5 8.2 L15.5 7.8 L15.3 12 L16.5 15.5 L12 18.5 L9.5 16.5 L10.5 13.5 L5.5 12.8 Z" fill="#fff" stroke="#3a6fd8" stroke-width="0.55"/>
<path d="M12.3 9 L14 5.5 M14 5.8 L13.3 3.3 M14 5.8 L15.2 3.5 M10.5 12 L12 12.5" stroke="#3a6fd8" stroke-width="0.9" fill="none"/>
<path d="M11.5 18.6 L17 15.2" stroke="#2b8ff0" stroke-width="1.1"/>
<path d="M7.5 23 L10 20 L12.5 23 M15 21.5 L17 23" stroke="#2d5fd0" stroke-width="0.7" fill="none"/>
<circle cx="12.5" cy="21.2" r="0.9" fill="#fff"/>
</g>
</svg>
<div class="abs" style="left:1682px;top:86px;height:20px;line-height:20px;font-size:14px;color:#555;white-space:nowrap;">同小鑫</div>
<div class="abs" style="left:1817px;top:82px;width:70px;height:30px;border:1px solid #2c7cbf;border-radius:3px;line-height:28px;text-align:center;color:#2c7cbf;font-size:14px">清除</div>
<div class="abs" style="left:1518px;top:122px;width:50px;height:24px;background:#eeeeee;border:1px solid #dddddd;line-height:22px;text-align:center;color:#333;font-size:12px">一</div>
<div class="abs" style="left:1571px;top:122px;width:50px;height:24px;background:#eeeeee;border:1px solid #dddddd;line-height:22px;text-align:center;color:#333;font-size:12px">二</div>
<div class="abs" style="left:1625px;top:122px;width:50px;height:24px;background:#eeeeee;border:1px solid #dddddd;line-height:22px;text-align:center;color:#333;font-size:12px">三</div>
<div class="abs" style="left:1678px;top:122px;width:50px;height:24px;background:#eeeeee;border:1px solid #dddddd;line-height:22px;text-align:center;color:#333;font-size:12px">四</div>
<div class="abs" style="left:1731px;top:122px;width:50px;height:24px;background:#eeeeee;border:1px solid #dddddd;line-height:22px;text-align:center;color:#333;font-size:12px">五</div>
<div class="abs" style="left:1785px;top:122px;width:50px;height:24px;background:#eeeeee;border:1px solid #dddddd;line-height:22px;text-align:center;color:#333;font-size:12px">六</div>
<div class="abs" style="left:1838px;top:122px;width:50px;height:24px;background:#eeeeee;border:1px solid #dddddd;line-height:22px;text-align:center;color:#333;font-size:12px">日</div>
<div class="abs" style="left:1518px;top:150.00px;width:50px;height:50px;border:1px solid #dddddd;background:#fff;"></div>
<div class="abs" style="left:1528px;top:155.70px;height:16px;line-height:16px;font-size:14px;color:#cccccc">25</div>
<div class="abs" style="left:1571px;top:150.00px;width:50px;height:50px;border:1px solid #dddddd;background:#fff;"></div>
<div class="abs" style="left:1578px;top:153.70px;height:16px;line-height:16px;font-size:14px;color:#cccccc">26</div>
<div class="abs" style="left:1625px;top:150.00px;width:50px;height:50px;border:1px solid #dddddd;background:#fff;"></div>
<div class="abs" style="left:1632px;top:153.70px;height:16px;line-height:16px;font-size:14px;color:#cccccc">27</div>
<div class="abs" style="left:1678px;top:150.00px;width:50px;height:50px;border:1px solid #dddddd;background:#fff;"></div>
<div class="abs" style="left:1685px;top:153.70px;height:16px;line-height:16px;font-size:14px;color:#cccccc">28</div>
<div class="abs" style="left:1731px;top:150.00px;width:50px;height:50px;border:1px solid #dddddd;background:#fff;"></div>
<div class="abs" style="left:1738px;top:153.70px;height:16px;line-height:16px;font-size:14px;color:#cccccc">29</div>
<div class="abs" style="left:1785px;top:150.00px;width:50px;height:50px;border:1px solid #dddddd;background:#fff;"></div>
<div class="abs" style="left:1792px;top:153.70px;height:16px;line-height:16px;font-size:14px;color:#cccccc">30</div>
<div class="abs" style="left:1838px;top:150.00px;width:50px;height:50px;border:1px solid #dddddd;background:#fff;"></div>
<div class="abs" style="left:1846px;top:153.70px;height:16px;line-height:16px;font-size:14px;color:#3a3a3a">1</div>
<div class="abs" style="left:1518px;top:205.00px;width:50px;height:50px;border:1px solid #dddddd;background:#fff;"></div>
<div class="abs" style="left:1526px;top:208.70px;height:16px;line-height:16px;font-size:14px;color:#3a3a3a">2</div>
<div class="abs" style="left:1571px;top:205.00px;width:50px;height:50px;border:1px solid #2c7cbf;background:#ebf3fd;"></div>
<div class="abs" style="left:1579px;top:208.70px;height:16px;line-height:16px;font-size:14px;color:#3a3a3a">3</div>
<div class="abs" style="left:1575px;top:232.10px;height:16px;line-height:16px;font-size:15px;color:#ff7a3d;-webkit-text-stroke:0.25px #ff7a3d">003</div>
<div class="abs" style="left:1625px;top:205.00px;width:50px;height:50px;border:1px solid #dddddd;background:#fff;"></div>
<div class="abs" style="left:1633px;top:208.70px;height:16px;line-height:16px;font-size:14px;color:#3a3a3a">4</div>
<div class="abs" style="left:1629px;top:232.10px;height:16px;line-height:16px;font-size:15px;color:#3eaaf5;-webkit-text-stroke:0.25px #3eaaf5">004</div>
<div class="abs" style="left:1678px;top:205.00px;width:50px;height:50px;border:1px solid #dddddd;background:#fff;"></div>
<div class="abs" style="left:1686px;top:208.70px;height:16px;line-height:16px;font-size:14px;color:#3a3a3a">5</div>
<div class="abs" style="left:1682px;top:232.10px;height:16px;line-height:16px;font-size:15px;color:#f5505a;-webkit-text-stroke:0.25px #f5505a">005</div>
<div class="abs" style="left:1731px;top:205.00px;width:50px;height:50px;border:1px solid #dddddd;background:#fff;"></div>
<div class="abs" style="left:1739px;top:208.70px;height:16px;line-height:16px;font-size:14px;color:#3a3a3a">6</div>
<div class="abs" style="left:1735px;top:232.10px;height:16px;line-height:16px;font-size:15px;color:#14c08a;-webkit-text-stroke:0.25px #14c08a">002</div>
<div class="abs" style="left:1785px;top:205.00px;width:50px;height:50px;border:1px solid #dddddd;background:#fff;"></div>
<div class="abs" style="left:1793px;top:208.70px;height:16px;line-height:16px;font-size:14px;color:#3a3a3a">7</div>
<div class="abs" style="left:1789px;top:232.10px;height:16px;line-height:16px;font-size:15px;color:#14c08a;-webkit-text-stroke:0.25px #14c08a">002</div>
<div class="abs" style="left:1838px;top:205.00px;width:50px;height:50px;border:1px solid #dddddd;background:#fff;"></div>
<div class="abs" style="left:1846px;top:208.70px;height:16px;line-height:16px;font-size:14px;color:#3a3a3a">8</div>
<div class="abs" style="left:1518px;top:260.00px;width:50px;height:50px;border:1px solid #dddddd;background:#fff;"></div>
<div class="abs" style="left:1526px;top:263.70px;height:16px;line-height:16px;font-size:14px;color:#3a3a3a">9</div>
<div class="abs" style="left:1571px;top:260.00px;width:50px;height:50px;border:1px solid #dddddd;background:#fff;"></div>
<div class="abs" style="left:1578px;top:263.70px;height:16px;line-height:16px;font-size:14px;color:#3a3a3a">10</div>
<div class="abs" style="left:1575px;top:287.10px;height:16px;line-height:16px;font-size:15px;color:#14c08a;-webkit-text-stroke:0.25px #14c08a">002</div>
<div class="abs" style="left:1625px;top:260.00px;width:50px;height:50px;border:1px solid #dddddd;background:#fff;"></div>
<div class="abs" style="left:1632px;top:263.70px;height:16px;line-height:16px;font-size:14px;color:#3a3a3a">11</div>
<div class="abs" style="left:1629px;top:287.10px;height:16px;line-height:16px;font-size:15px;color:#14c08a;-webkit-text-stroke:0.25px #14c08a">002</div>
<div class="abs" style="left:1678px;top:260.00px;width:50px;height:50px;border:1px solid #dddddd;background:#fff;"></div>
<div class="abs" style="left:1685px;top:263.70px;height:16px;line-height:16px;font-size:14px;color:#3a3a3a">12</div>
<div class="abs" style="left:1682px;top:287.10px;height:16px;line-height:16px;font-size:15px;color:#14c08a;-webkit-text-stroke:0.25px #14c08a">002</div>
<div class="abs" style="left:1731px;top:260.00px;width:50px;height:50px;border:1px solid #dddddd;background:#fff;"></div>
<div class="abs" style="left:1738px;top:263.70px;height:16px;line-height:16px;font-size:14px;color:#3a3a3a">13</div>
<div class="abs" style="left:1735px;top:287.10px;height:16px;line-height:16px;font-size:15px;color:#14c08a;-webkit-text-stroke:0.25px #14c08a">002</div>
<div class="abs" style="left:1785px;top:260.00px;width:50px;height:50px;border:1px solid #dddddd;background:#fff;"></div>
<div class="abs" style="left:1792px;top:263.70px;height:16px;line-height:16px;font-size:14px;color:#3a3a3a">14</div>
<div class="abs" style="left:1789px;top:287.10px;height:16px;line-height:16px;font-size:15px;color:#14c08a;-webkit-text-stroke:0.25px #14c08a">002</div>
<div class="abs" style="left:1838px;top:260.00px;width:50px;height:50px;border:1px solid #dddddd;background:#fff;"></div>
<div class="abs" style="left:1845px;top:263.70px;height:16px;line-height:16px;font-size:14px;color:#3a3a3a">15</div>
<div class="abs" style="left:1518px;top:314.40px;width:50px;height:50px;border:1px solid #dddddd;background:#fff;"></div>
<div class="abs" style="left:1525px;top:318.10px;height:16px;line-height:16px;font-size:14px;color:#3a3a3a">16</div>
<div class="abs" style="left:1571px;top:314.40px;width:50px;height:50px;border:1px solid #dddddd;background:#fff;"></div>
<div class="abs" style="left:1578px;top:318.10px;height:16px;line-height:16px;font-size:14px;color:#3a3a3a">17</div>
<div class="abs" style="left:1575px;top:341.50px;height:16px;line-height:16px;font-size:15px;color:#14c08a;-webkit-text-stroke:0.25px #14c08a">002</div>
<div class="abs" style="left:1625px;top:314.40px;width:50px;height:50px;border:1px solid #dddddd;background:#fff;"></div>
<div class="abs" style="left:1632px;top:318.10px;height:16px;line-height:16px;font-size:14px;color:#3a3a3a">18</div>
<div class="abs" style="left:1629px;top:341.50px;height:16px;line-height:16px;font-size:15px;color:#14c08a;-webkit-text-stroke:0.25px #14c08a">002</div>
<div class="abs" style="left:1678px;top:314.40px;width:50px;height:50px;border:1px solid #dddddd;background:#fff;"></div>
<div class="abs" style="left:1685px;top:318.10px;height:16px;line-height:16px;font-size:14px;color:#3a3a3a">19</div>
<div class="abs" style="left:1682px;top:341.50px;height:16px;line-height:16px;font-size:15px;color:#14c08a;-webkit-text-stroke:0.25px #14c08a">002</div>
<div class="abs" style="left:1731px;top:314.40px;width:50px;height:50px;border:1px solid #dddddd;background:#fff;"></div>
<div class="abs" style="left:1738px;top:318.10px;height:16px;line-height:16px;font-size:14px;color:#3a3a3a">20</div>
<div class="abs" style="left:1735px;top:341.50px;height:16px;line-height:16px;font-size:15px;color:#14c08a;-webkit-text-stroke:0.25px #14c08a">002</div>
<div class="abs" style="left:1785px;top:314.40px;width:50px;height:50px;border:1px solid #dddddd;background:#fff;"></div>
<div class="abs" style="left:1792px;top:318.10px;height:16px;line-height:16px;font-size:14px;color:#3a3a3a">21</div>
<div class="abs" style="left:1789px;top:341.50px;height:16px;line-height:16px;font-size:15px;color:#a38cf0;-webkit-text-stroke:0.25px #a38cf0">006</div>
<div class="abs" style="left:1838px;top:314.40px;width:50px;height:50px;border:1px solid #dddddd;background:#fff;"></div>
<div class="abs" style="left:1845px;top:318.10px;height:16px;line-height:16px;font-size:14px;color:#3a3a3a">22</div>
<div class="abs" style="left:1518px;top:369.30px;width:50px;height:50px;border:1px solid #dddddd;background:#fff;"></div>
<div class="abs" style="left:1525px;top:373.00px;height:16px;line-height:16px;font-size:14px;color:#3a3a3a">23</div>
<div class="abs" style="left:1571px;top:369.30px;width:50px;height:50px;border:1px solid #dddddd;background:#fff;"></div>
<div class="abs" style="left:1578px;top:373.00px;height:16px;line-height:16px;font-size:14px;color:#3a3a3a">24</div>
<div class="abs" style="left:1575px;top:396.40px;height:16px;line-height:16px;font-size:15px;color:#14c08a;-webkit-text-stroke:0.25px #14c08a">002</div>
<div class="abs" style="left:1625px;top:369.30px;width:50px;height:50px;border:1px solid #dddddd;background:#fff;"></div>
<div class="abs" style="left:1632px;top:373.00px;height:16px;line-height:16px;font-size:14px;color:#3a3a3a">25</div>
<div class="abs" style="left:1629px;top:396.40px;height:16px;line-height:16px;font-size:15px;color:#14c08a;-webkit-text-stroke:0.25px #14c08a">002</div>
<div class="abs" style="left:1678px;top:369.30px;width:50px;height:50px;border:1px solid #dddddd;background:#fff;"></div>
<div class="abs" style="left:1685px;top:373.00px;height:16px;line-height:16px;font-size:14px;color:#3a3a3a">26</div>
<div class="abs" style="left:1682px;top:396.40px;height:16px;line-height:16px;font-size:15px;color:#3eaaf5;-webkit-text-stroke:0.25px #3eaaf5">004</div>
<div class="abs" style="left:1731px;top:369.30px;width:50px;height:50px;border:1px solid #dddddd;background:#fff;"></div>
<div class="abs" style="left:1738px;top:373.00px;height:16px;line-height:16px;font-size:14px;color:#3a3a3a">27</div>
<div class="abs" style="left:1735px;top:396.40px;height:16px;line-height:16px;font-size:15px;color:#14c08a;-webkit-text-stroke:0.25px #14c08a">002</div>
<div class="abs" style="left:1785px;top:369.30px;width:50px;height:50px;border:1px solid #dddddd;background:#fff;"></div>
<div class="abs" style="left:1792px;top:373.00px;height:16px;line-height:16px;font-size:14px;color:#3a3a3a">28</div>
<div class="abs" style="left:1789px;top:396.40px;height:16px;line-height:16px;font-size:15px;color:#14c08a;-webkit-text-stroke:0.25px #14c08a">002</div>
<div class="abs" style="left:1838px;top:369.30px;width:50px;height:50px;border:1px solid #dddddd;background:#fff;"></div>
<div class="abs" style="left:1845px;top:373.00px;height:16px;line-height:16px;font-size:14px;color:#3a3a3a">29</div>
<div class="abs" style="left:1518px;top:424.20px;width:50px;height:50px;border:1px solid #dddddd;background:#fff;"></div>
<div class="abs" style="left:1525px;top:427.90px;height:16px;line-height:16px;font-size:14px;color:#3a3a3a">30</div>
<div class="abs" style="left:1571px;top:424.20px;width:50px;height:50px;border:1px solid #dddddd;background:#fff;"></div>
<div class="abs" style="left:1578px;top:427.90px;height:16px;line-height:16px;font-size:14px;color:#3a3a3a">31</div>
<div class="abs" style="left:1575px;top:451.30px;height:16px;line-height:16px;font-size:15px;color:#14c08a;-webkit-text-stroke:0.25px #14c08a">002</div>
<div class="abs" style="left:1625px;top:424.20px;width:50px;height:50px;border:1px solid #dddddd;background:#fff;"></div>
<div class="abs" style="left:1633px;top:427.90px;height:16px;line-height:16px;font-size:14px;color:#cccccc">1</div>
<div class="abs" style="left:1678px;top:424.20px;width:50px;height:50px;border:1px solid #dddddd;background:#fff;"></div>
<div class="abs" style="left:1686px;top:427.90px;height:16px;line-height:16px;font-size:14px;color:#cccccc">2</div>
<div class="abs" style="left:1731px;top:424.20px;width:50px;height:50px;border:1px solid #dddddd;background:#fff;"></div>
<div class="abs" style="left:1739px;top:427.90px;height:16px;line-height:16px;font-size:14px;color:#cccccc">3</div>
<div class="abs" style="left:1785px;top:424.20px;width:50px;height:50px;border:1px solid #dddddd;background:#fff;"></div>
<div class="abs" style="left:1793px;top:427.90px;height:16px;line-height:16px;font-size:14px;color:#cccccc">4</div>
<div class="abs" style="left:1838px;top:424.20px;width:50px;height:50px;border:1px solid #dddddd;background:#fff;"></div>
<div class="abs" style="left:1846px;top:427.90px;height:16px;line-height:16px;font-size:14px;color:#cccccc">5</div>
<div class="abs" style="left:1518px;top:488px;width:370px;height:30px;background:#eeeeee;border:1px solid #dddddd;border-radius:4px 4px 0 0"></div>
<svg class="abs" style="left:1696px;top:497px" width="16" height="14" viewBox="0 0 16 14"><path d="M1 6.5L8 1.5 15 6.5M1 12.5L8 7.5 15 12.5" stroke="#777" stroke-width="1.3" fill="none"/></svg>
<div class="abs" style="left:1518px;top:517px;width:370px;height:171px;background:#fff;border:1px solid #dddddd;border-top:none"></div>
<div class="abs" style="left:1873px;top:518px;width:14px;height:169px;background:#f1f1f1"></div>
<div class="abs" style="left:1874px;top:519px;width:12px;height:60px;background:#c9c9c9"></div>
<svg class="abs" style="left:1877px;top:677px" width="6" height="5" viewBox="0 0 6 5"><path d="M0 0H6L3 4Z" fill="#999"/></svg>
<div class="abs" style="left:1535px;top:539px;height:20px;line-height:20px;font-size:14px;color:#2a2a2a;white-space:nowrap"><span style="color:#f5a623;font-size:15px;-webkit-text-stroke:0.2px #f5a623">001</span><span style="margin:0 1px 0 1px">/</span>管理白班</div><div class="cb" style="left:1644px;top:541px"></div>
<div class="abs" style="left:1716px;top:539px;height:20px;line-height:20px;font-size:14px;color:#2a2a2a;white-space:nowrap"><span style="color:#f5505a;font-size:15px;-webkit-text-stroke:0.2px #f5505a">005</span><span style="margin:0 1px 0 1px">/</span>设计早班</div><div class="cb" style="left:1825px;top:541px"></div>
<div class="abs" style="left:1535px;top:578px;height:20px;line-height:20px;font-size:14px;color:#2a2a2a;white-space:nowrap"><span style="color:#14c08a;font-size:15px;-webkit-text-stroke:0.2px #14c08a">002</span><span style="margin:0 1px 0 1px">/</span>管理晚班</div><div class="cb" style="left:1644px;top:580px"></div>
<div class="abs" style="left:1716px;top:578px;height:20px;line-height:20px;font-size:14px;color:#2a2a2a;white-space:nowrap"><span style="color:#a38cf0;font-size:15px;-webkit-text-stroke:0.2px #a38cf0">006</span><span style="margin:0 1px 0 1px">/</span>设计中班</div><div class="cb" style="left:1825px;top:580px"></div>
<div class="abs" style="left:1535px;top:617px;height:20px;line-height:20px;font-size:14px;color:#2a2a2a;white-space:nowrap"><span style="color:#ff7a3d;font-size:15px;-webkit-text-stroke:0.2px #ff7a3d">003</span><span style="margin:0 1px 0 1px">/</span>员工白班</div><svg class="abs" style="left:1644px;top:618px" width="16" height="16" viewBox="0 0 16 16"><rect width="16" height="16" rx="2" fill="#2c7cbf"/><path d="M3.8 8.3l2.9 2.7L12.3 5.4" stroke="#fff" stroke-width="1.3" fill="none"/></svg>
<div class="abs" style="left:1716px;top:617px;height:20px;line-height:20px;font-size:14px;color:#2a2a2a;white-space:nowrap"><span style="color:#2c7cbf;font-size:15px;-webkit-text-stroke:0.2px #2c7cbf">007</span><span style="margin:0 1px 0 1px">/</span>设计晚班</div><div class="cb" style="left:1825px;top:619px"></div>
<div class="abs" style="left:1535px;top:656px;height:20px;line-height:20px;font-size:14px;color:#2a2a2a;white-space:nowrap"><span style="color:#3eaaf5;font-size:15px;-webkit-text-stroke:0.2px #3eaaf5">004</span><span style="margin:0 1px 0 1px">/</span>员工晚班</div><div class="cb" style="left:1644px;top:658px"></div>
<div class="abs" style="left:1716px;top:656px;height:20px;line-height:20px;font-size:14px;color:#2a2a2a;white-space:nowrap"><span style="color:#b8651b;font-size:15px;-webkit-text-stroke:0.2px #b8651b">008</span><span style="margin:0 1px 0 1px">/</span>直落白班</div><div class="cb" style="left:1825px;top:658px"></div>
<div class="abs" style="left:1802px;top:702px;width:70px;height:30px;background:#0067bb;border-radius:4px;line-height:30px;text-align:center;color:#fff;font-size:14px">保存</div>
<div class="abs" style="left:1518px;top:765px;width:24px;height:24px;border:1px solid #dddddd;border-radius:50%;background:#fff"></div>
<div class="abs" style="left:1523.5px;top:770.5px;width:13px;height:13px;border-radius:50%;background:#2c7cbf"></div>
<div class="abs" style="left:1550px;top:767px;height:20px;line-height:20px;font-size:14px;color:#555;white-space:nowrap;">今天</div>
<div class="abs" style="left:1617.5px;top:765px;width:24px;height:24px;border:1px solid #dddddd;border-radius:50%;background:#eeeeee"></div>
<div class="abs" style="left:1648px;top:767px;height:20px;line-height:20px;font-size:14px;color:#555;white-space:nowrap;">含前一天</div>
<div class="abs" style="left:1737.5px;top:765px;width:24px;height:24px;border:1px solid #dddddd;border-radius:50%;background:#eeeeee"></div>
<div class="abs" style="left:1768px;top:767px;height:20px;line-height:20px;font-size:14px;color:#555;white-space:nowrap;">含后一天</div>
<div class="abs" style="left:1518px;top:803px;width:370px;height:226px;border:1px solid #e8e8e8;border-top:none;background:#fff"></div>
<div class="abs" style="left:1518px;top:803px;width:370px;height:46px;background:#eeeeee"></div>
<div class="tc" style="left:1543px;top:816px;width:80px;height:20px;line-height:20px;color:#444;-webkit-text-stroke:0.35px #444">时间</div>
<div class="tc" style="left:1659px;top:816px;width:80px;height:20px;line-height:20px;color:#444;-webkit-text-stroke:0.35px #444">卡号</div>
<div class="tc" style="left:1738px;top:816px;width:80px;height:20px;line-height:20px;color:#444;-webkit-text-stroke:0.35px #444">机号</div>
<div class="tc" style="left:1812px;top:816px;width:80px;height:20px;line-height:20px;color:#444;-webkit-text-stroke:0.35px #444">操作</div>
<div class="abs" style="left:1519px;top:893.3px;width:368px;height:1px;background:#e8e8e8"></div>
<div class="abs" style="left:1530px;top:861.0px;height:20px;line-height:20px;font-size:14px;color:#555;white-space:nowrap;letter-spacing:0.45px">2019/08/01 10:00</div>
<div class="tc" style="left:1661px;top:861.0px;width:80px;height:20px;line-height:20px;color:#555">0123</div>
<div class="tc" style="left:1738px;top:861.0px;width:80px;height:20px;line-height:20px;color:#555">001</div>
<div class="tc" style="left:1812px;top:863.0px;width:80px;height:20px;line-height:20px;color:#2c7cbf">作废</div>
<div class="abs" style="left:1519px;top:938.1px;width:368px;height:1px;background:#e8e8e8"></div>
<div class="abs" style="left:1530px;top:905.85px;height:20px;line-height:20px;font-size:14px;color:#555;white-space:nowrap;letter-spacing:0.45px">2019/08/01 10:00</div>
<div class="tc" style="left:1661px;top:905.9px;width:80px;height:20px;line-height:20px;color:#555">0123</div>
<div class="tc" style="left:1738px;top:905.9px;width:80px;height:20px;line-height:20px;color:#555">001</div>
<div class="tc" style="left:1812px;top:907.9px;width:80px;height:20px;line-height:20px;color:#2c7cbf">作废</div>
<div class="abs" style="left:1519px;top:983.0px;width:368px;height:1px;background:#e8e8e8"></div>
<div class="abs" style="left:1530px;top:950.7px;height:20px;line-height:20px;font-size:14px;color:#555;white-space:nowrap;letter-spacing:0.45px">2019/08/01 10:00</div>
<div class="tc" style="left:1661px;top:950.7px;width:80px;height:20px;line-height:20px;color:#555">0123</div>
<div class="tc" style="left:1738px;top:950.7px;width:80px;height:20px;line-height:20px;color:#555">001</div>
<div class="tc" style="left:1812px;top:952.7px;width:80px;height:20px;line-height:20px;color:#2c7cbf">作废</div>
<div class="abs" style="left:1530px;top:995.55px;height:20px;line-height:20px;font-size:14px;color:#555;white-space:nowrap;letter-spacing:0.45px">2019/08/01 10:00</div>
<div class="tc" style="left:1661px;top:995.5px;width:80px;height:20px;line-height:20px;color:#555">0123</div>
<div class="tc" style="left:1738px;top:995.5px;width:80px;height:20px;line-height:20px;color:#555">001</div>
<div class="tc" style="left:1812px;top:997.5px;width:80px;height:20px;line-height:20px;color:#2c7cbf">作废</div>
</body></html>
